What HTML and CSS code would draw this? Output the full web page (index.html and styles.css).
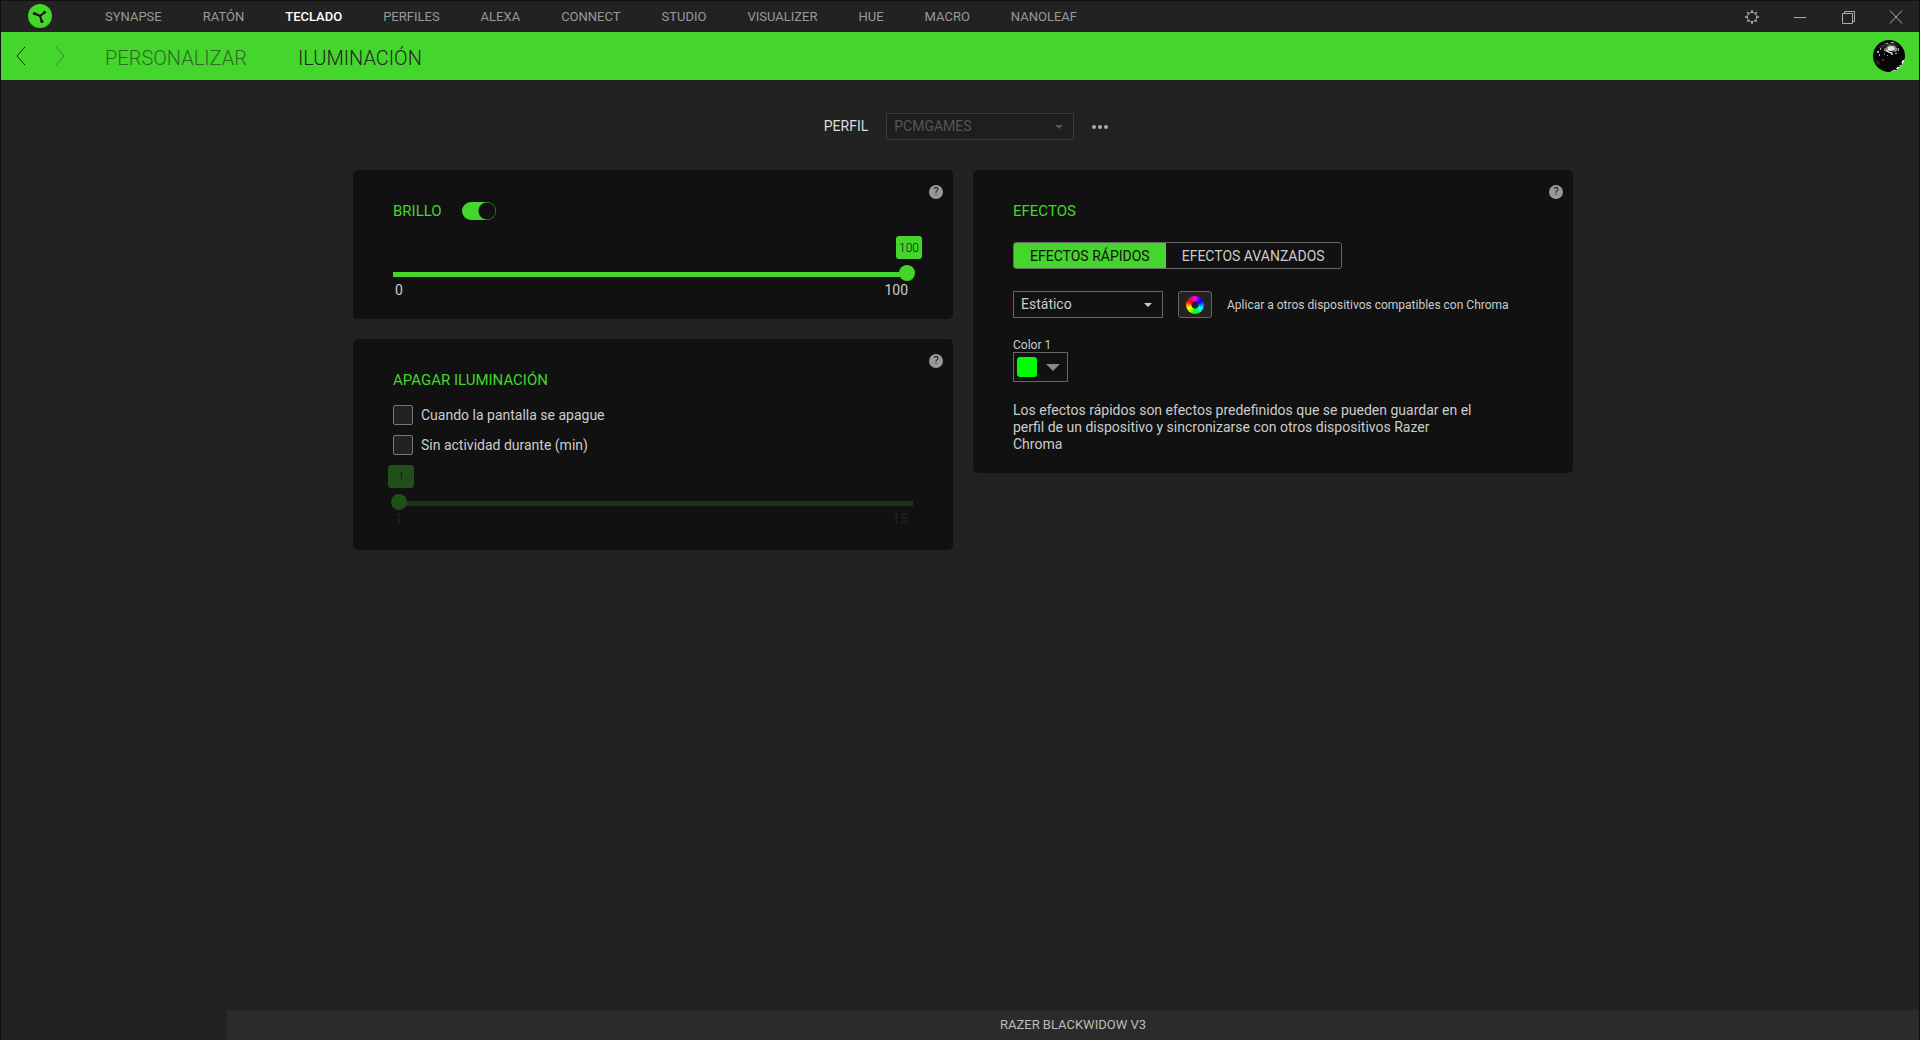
FILE: index.html
```html
<!DOCTYPE html>
<html lang="es">
<head>
<meta charset="utf-8">
<meta name="viewport" content="width=device-width, initial-scale=1">
<title>Razer Synapse</title>
<link rel="stylesheet" href="styles.css">
</head>
<body>
<header class="topbar">
  <svg class="logo" viewBox="0 0 24 24" aria-hidden="true">
    <circle cx="12" cy="12" r="12" fill="#44d62c"/>
    <path d="M6.400 9.500 12 12 16.500 8.500M12 12 13.800 17.500" fill="none" stroke="#111" stroke-width="2" stroke-linecap="round" stroke-linejoin="round"/>
    <circle cx="6.300" cy="9.500" r="1.500" fill="#111"/><circle cx="16.500" cy="8.300" r="1.500" fill="#111"/><circle cx="13.900" cy="17.500" r="1.500" fill="#111"/>
  </svg>
  <nav class="modules">
    <a href="#">SYNAPSE</a><a href="#">RATÓN</a><a href="#" class="active">TECLADO</a><a href="#">PERFILES</a><a href="#">ALEXA</a><a href="#">CONNECT</a><a href="#">STUDIO</a><a href="#">VISUALIZER</a><a href="#">HUE</a><a href="#">MACRO</a><a href="#">NANOLEAF</a>
  </nav>
  <div class="window-tools">
    <button type="button" aria-label="Ajustes"><svg viewBox="0 0 14 14"><circle cx="7" cy="7" r="4.700"/><path d="M7 0v2.500M7 11.500v2.500M0 7h2.500M11.500 7H14M2.200 2.200l1.600 1.600M10.200 10.200l1.600 1.600M2.200 11.800l1.600-1.600M10.200 3.800l1.600-1.600" stroke-width="1.600"/></svg></button>
    <button type="button" aria-label="Minimizar"><svg viewBox="0 0 14 14"><path d="M1 7.500h12"/></svg></button>
    <button type="button" aria-label="Restaurar"><svg viewBox="0 0 14 14"><path d="M1.500 3.500h10v10h-10zM3.500 3V1.500h10v10H12"/></svg></button>
    <button type="button" aria-label="Cerrar"><svg viewBox="0 0 14 14"><path d="M1 .500l12 13M13 .500l-12 13"/></svg></button>
  </div>
</header>

<div class="subbar">
  <div class="history">
    <button type="button" aria-label="Atrás"><svg viewBox="0 0 10 20"><path d="M9 1 1 10l8 9"/></svg></button>
    <button type="button" aria-label="Adelante" disabled><svg viewBox="0 0 10 20"><path d="M1 1l8 9-8 9"/></svg></button>
  </div>
  <nav class="tabs">
    <a href="#">PERSONALIZAR</a>
    <a href="#" class="active">ILUMINACIÓN</a>
  </nav>
  <button type="button" class="avatar" aria-label="Cuenta">
    <svg viewBox="0 0 32 32">
      <clipPath id="face"><circle cx="16" cy="16" r="16"/></clipPath>
      <g clip-path="url(#face)">
        <path d="M0 0h32v32H0z" fill="#060606"/>
        <path d="M5 7 12 3l8-1 6 4-5 1-7-1-6 3z" fill="#2b2b2b"/>
        <path d="M11 9l5-4 6 1 3 3-2 3-5-1-4 1-3-1z" fill="#888"/>
        <path d="M15 7l5-1 2 3-4 2-3-1zM13 11l2-1 1 2h3l1 2-4-1z" fill="#e8e8e8"/>
        <path d="M4 11h2v2H4zM7 8h1v2H7zM6 14h1v2H6zM11 14h1v1h-1zM14 15h1v1h-1zM18 14h2v1h-2zM22 13h2v1h-2zM25 8h1v3h-1zM13 3h2v1h-2zM18 2h3v1h-3z" fill="#aaa"/>
        <path d="M4 20l3 2-1 4-4-4z" fill="#252525"/>
        <path d="M9 19h2v2H9z" fill="#a01818"/>
        <path d="M32 19l-3 2-1 4-3 1-2 3-6 3h15z" fill="#f4f4f4"/>
        <path d="M25 26h2v1h-2zM28 23h1v2h-1zM22 29h2v1h-2z" fill="#111"/>
      </g>
    </svg>
  </button>
</div>

<main class="content">
  <div class="profile">
    <label for="profile">PERFIL</label>
    <span class="select profile-select"><select id="profile" disabled><option>PCMGAMES</option></select></span>
    <button type="button" class="more" aria-label="Más opciones"><svg viewBox="0 0 16 4"><circle cx="2" cy="2" r="2"/><circle cx="8" cy="2" r="2"/><circle cx="14" cy="2" r="2"/></svg></button>
  </div>

  <div class="board">
    <div class="column">
      <section class="card">
        <button type="button" class="help" aria-label="Ayuda">?</button>
        <div class="card-head">
          <h2><label for="brightness-on">BRILLO</label></h2>
          <input type="checkbox" class="toggle" id="brightness-on" checked>
        </div>
        <div class="slider slider-brightness">
          <output class="bubble bubble-end" for="brightness">100</output>
          <input type="range" id="brightness" min="0" max="100" value="100" aria-label="Brillo">
          <div class="scale"><span>0</span><span>100</span></div>
        </div>
      </section>

      <section class="card">
        <button type="button" class="help" aria-label="Ayuda">?</button>
        <div class="card-head"><h2>APAGAR ILUMINACIÓN</h2></div>
        <div class="checks">
          <label class="check"><input type="checkbox">Cuando la pantalla se apague</label>
          <label class="check"><input type="checkbox">Sin actividad durante (min)</label>
        </div>
        <div class="slider off">
          <output class="bubble" for="idle">1</output>
          <input type="range" id="idle" min="1" max="15" value="1" disabled aria-label="Minutos sin actividad">
          <div class="scale"><span>1</span><span>15</span></div>
        </div>
      </section>
    </div>

    <section class="card">
      <button type="button" class="help" aria-label="Ayuda">?</button>
      <div class="card-head"><h2>EFECTOS</h2></div>
      <div class="segmented">
        <button type="button" class="active">EFECTOS RÁPIDOS</button>
        <button type="button">EFECTOS AVANZADOS</button>
      </div>
      <div class="effect-row">
        <span class="select effect-select"><select aria-label="Efecto"><option>Estático</option></select></span>
        <button type="button" class="chroma" id="chroma" aria-label="Chroma"><span class="wheel"></span></button>
        <label for="chroma" class="small">Aplicar a otros dispositivos compatibles con Chroma</label>
      </div>
      <div class="color">
        <label for="color" class="small">Color 1</label>
        <button type="button" class="picker" id="color"><span class="swatch"></span></button>
      </div>
      <p class="note">Los efectos rápidos son efectos predefinidos que se pueden guardar en el perfil de un dispositivo y sincronizarse con otros dispositivos Razer Chroma</p>
    </section>
  </div>
</main>

<footer class="device">RAZER BLACKWIDOW V3</footer>
</body>
</html>
```
FILE: styles.css
```css
:root {
  --green: #44d62c;
  --bg: #222;
  --card: #111;
  --line: #666;
  --text: #ccc;
}

* { box-sizing: border-box; }

body {
  margin: 0;
  min-height: 100vh;
  display: flex;
  flex-direction: column;
  background: var(--bg);
  border: 1px solid #111;
  border-bottom: 0;
  color: var(--text);
  font: 14px/17px Roboto, "Liberation Sans", sans-serif;
}

button, select { font: inherit; color: inherit; }
button { padding: 0; border: 0; background: none; cursor: pointer; }
a { color: inherit; text-decoration: none; }
svg { display: block; }

/* Top bar */
.topbar {
  display: flex;
  align-items: center;
  height: 31px;
  padding: 0 16px 0 27px;
}
.logo { width: 24px; height: 24px; margin-bottom: 1px; }
.modules {
  display: flex;
  gap: 41px;
  margin-left: 53px;
  font-size: 13px;
  color: #999;
}
.modules .active { color: #fff; font-weight: 500; }
.window-tools { display: flex; gap: 34px; margin-left: auto; }
.window-tools svg {
  width: 14px;
  height: 14px;
  fill: none;
  stroke: #aaa;
}

/* Section bar */
.subbar {
  display: flex;
  align-items: center;
  height: 48px;
  padding: 0 14px 0 15px;
  background: var(--green);
  color: #222;
}
.history { display: flex; gap: 29px; }
.history svg {
  width: 10px;
  height: 20px;
  fill: none;
  stroke: #222;
}
.history button:disabled { opacity: .4; }
.tabs {
  display: flex;
  gap: 51px;
  margin-left: 40px;
  padding-top: 3px;
  font-size: 20px;
  font-weight: 300;
  line-height: 28px;
}
.tabs a:not(.active) { opacity: .6; }
.avatar { margin-left: auto; }
.avatar svg { width: 32px; height: 32px; }

/* Content */
.content { flex: 1; padding: 33px 20px 20px 26px; }
.profile {
  display: flex;
  justify-content: center;
  align-items: center;
  margin-bottom: 30px;
  padding-left: 6px;
}
.profile label { margin-right: 18px; color: #ddd; }
.profile-select { width: 188px; color: #555; }
.more { margin-left: 18px; }
.more svg { width: 16px; height: 4px; fill: #aaa; }

.board {
  display: grid;
  grid-template-columns: repeat(2, minmax(0, 600px));
  justify-content: center;
  align-items: start;
  gap: 20px;
}
.column { display: grid; gap: 20px; }
.card {
  position: relative;
  padding: 30px 40px 20px;
  background: var(--card);
  border-radius: 5px;
}
.card-head {
  display: flex;
  align-items: center;
  gap: 20px;
  height: 22px;
}
h2 {
  margin: 0;
  color: var(--green);
  font-size: 15px;
  font-weight: 400;
  line-height: 24px;
}
.help {
  position: absolute;
  top: 15px;
  right: 10px;
  width: 14px;
  height: 14px;
  border-radius: 50%;
  background: #999;
  color: #111;
  font-size: 11px;
  line-height: 14px;
  text-align: center;
}

/* Drop-downs */
.select { display: inline-grid; align-items: center; }
.select::after {
  content: "";
  grid-area: 1 / 1;
  justify-self: end;
  margin-right: 11px;
  border: 4px solid transparent;
  border-top-color: currentColor;
  border-bottom: 0;
  pointer-events: none;
}
.select select {
  grid-area: 1 / 1;
  width: 100%;
  height: 27px;
  padding: 0 7px;
  appearance: none;
  background: var(--card);
  border: 1px solid var(--line);
  border-radius: 0;
  opacity: 1;
}
.profile-select select { background: #1e1e1e; border-color: #383838; }

.effect-select { width: 150px; }

/* Toggle */
.toggle {
  appearance: none;
  width: 34px;
  height: 18px;
  margin: 0;
  border-radius: 9px;
  background: radial-gradient(circle at 25px 9px, var(--card) 8px, var(--green) 9px);
}

/* Sliders */
.slider { display: flex; flex-direction: column; }
.slider-brightness { margin-top: 14px; }
.bubble {
  width: 26px;
  height: 23px;
  margin-left: -5px;
  border-radius: 3px;
  background: var(--green);
  color: #111;
  font-size: 12px;
  font-weight: 300;
  line-height: 24px;
  text-align: center;
}
.bubble-end { align-self: flex-end; margin-right: -9px; }
.slider input {
  appearance: none;
  height: 16px;
  margin: 6px -2px 0;
  background: none;
}
.slider input::-webkit-slider-runnable-track {
  height: 16px;
  background: linear-gradient(var(--green), var(--green)) 2px 7px / calc(100% - 4px) 5px no-repeat;
}
.slider input::-webkit-slider-thumb {
  appearance: none;
  width: 16px;
  height: 16px;
  border-radius: 50%;
  background: var(--green);
}
.scale {
  display: flex;
  justify-content: space-between;
  padding: 1px 5px 0 2px;
}
.slider.off { margin: 10px 0 2px; }
.off .bubble { background: #214f19; }
.off input::-webkit-slider-runnable-track { background-image: linear-gradient(#1b3316, #1b3316); }
.off input::-webkit-slider-thumb { background: #214f19; }
.off .scale { color: #222; }

/* Tick boxes */
.checks { display: grid; gap: 10px; margin-top: 14px; }
.check { display: flex; align-items: center; gap: 8px; }
.check input {
  appearance: none;
  width: 20px;
  height: 20px;
  margin: 0;
  border: 1px solid #777;
  border-radius: 2px;
  background: #222;
}

/* Effects */
.segmented {
  display: inline-flex;
  height: 27px;
  margin-top: 20px;
  border: 1px solid var(--line);
  border-radius: 3px;
  overflow: hidden;
  vertical-align: top;
}
.segmented button { padding: 0 16px; line-height: 27px; }
.segmented .active { background: var(--green); color: #111; }
.effect-row {
  display: flex;
  align-items: center;
  margin-top: 22px;
}
.small { font-size: 12px; line-height: 14px; }
.chroma {
  display: grid;
  place-items: center;
  width: 34px;
  height: 27px;
  margin: 0 15px;
  border: 1px solid var(--line);
  border-radius: 3px;
  background: #222;
}
.wheel {
  width: 18px;
  height: 18px;
  border-radius: 50%;
  background:
    radial-gradient(circle, #222 3px, transparent 4px),
    conic-gradient(#f0f, #00f 60deg, #0ff 115deg, #0f0 180deg, #ff0 245deg, #f00 300deg, #f0f);
}
.color {
  display: flex;
  flex-direction: column;
  align-items: flex-start;
  margin-top: 20px;
}
.picker {
  display: flex;
  align-items: center;
  gap: 9px;
  width: 55px;
  height: 30px;
  padding: 0 3px;
  border: 1px solid var(--line);
}
.picker::after {
  content: "";
  border: 7px solid transparent;
  border-top-color: #888;
  border-bottom: 0;
}
.swatch { width: 20px; height: 20px; border-radius: 3px; background: #0f0; }
.note { max-width: 460px; margin: 20px 0 0; }

/* Device bar */
.device {
  height: 30px;
  margin-left: 226px;
  background: #2b2b2b;
  color: #bbb;
  font-size: 13px;
  line-height: 30px;
  text-align: center;
}
```
